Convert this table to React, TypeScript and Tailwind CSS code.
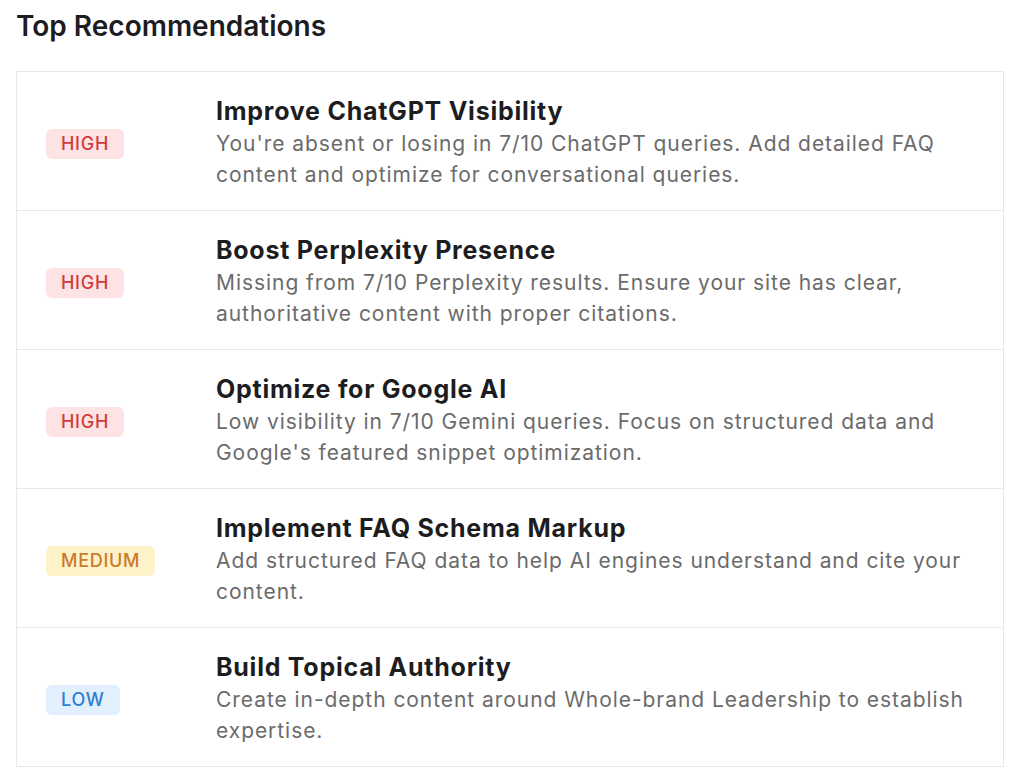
const recs = [
  {
    level: 'HIGH',
    title: 'Improve ChatGPT Visibility',
    text: "You're absent or losing in 7/10 ChatGPT queries. Add detailed FAQ content and optimize for conversational queries.",
  },
  {
    level: 'HIGH',
    title: 'Boost Perplexity Presence',
    text: 'Missing from 7/10 Perplexity results. Ensure your site has clear, authoritative content with proper citations.',
  },
  {
    level: 'HIGH',
    title: 'Optimize for Google AI',
    text: "Low visibility in 7/10 Gemini queries. Focus on structured data and Google's featured snippet optimization.",
  },
  {
    level: 'MEDIUM',
    title: 'Implement FAQ Schema Markup',
    text: 'Add structured FAQ data to help AI engines understand and cite your content.',
  },
  {
    level: 'LOW',
    title: 'Build Topical Authority',
    text: 'Create in-depth content around Whole-brand Leadership to establish expertise.',
  },
]

const badgeClass: Record<string, string> = {
  HIGH: 'bg-[#fde3e3] text-[#d13b3b]',
  MEDIUM: 'bg-[#fdf2c8] text-[#cc7a2c]',
  LOW: 'bg-[#e2f0fd] text-[#2f7dd0]',
}

const Badge = ({ level }: { level: string }) => (
  <span
    className={`inline-block rounded-md px-[15px] h-[30px] leading-[30px] text-[18px] font-medium tracking-[0.04em] ${badgeClass[level]}`}
  >
    {level}
  </span>
)

export default function App() {
  return (
    <div className="min-h-screen bg-white px-4 pt-[9px] font-['Inter',sans-serif]">
      <h2 className="text-[28px] font-semibold leading-[34px] text-[#1d1d1f]">Top Recommendations</h2>

      <div className="mt-[28px] w-[988px] border border-[#e8e8e8]">
        {recs.map((r, i) => (
          <div
            key={i}
            className={`flex items-center pl-[29px] pr-6 ${i > 0 ? 'h-[139px] border-t border-[#e8e8e8]' : 'h-[138px]'}`}
          >
            <div className="w-[170px] shrink-0 mt-[5px]">
              <Badge level={r.level} />
            </div>
            <div className="flex-1 mt-[2px]">
              <div className="text-[25px] font-bold leading-[32px] tracking-[0.03em] text-[#1d1d1f]">{r.title}</div>
              <p className="mt-px text-[21px] leading-[31px] tracking-[0.045em] text-[#6b6b6b]">{r.text}</p>
            </div>
          </div>
        ))}
      </div>
    </div>
  )
}
